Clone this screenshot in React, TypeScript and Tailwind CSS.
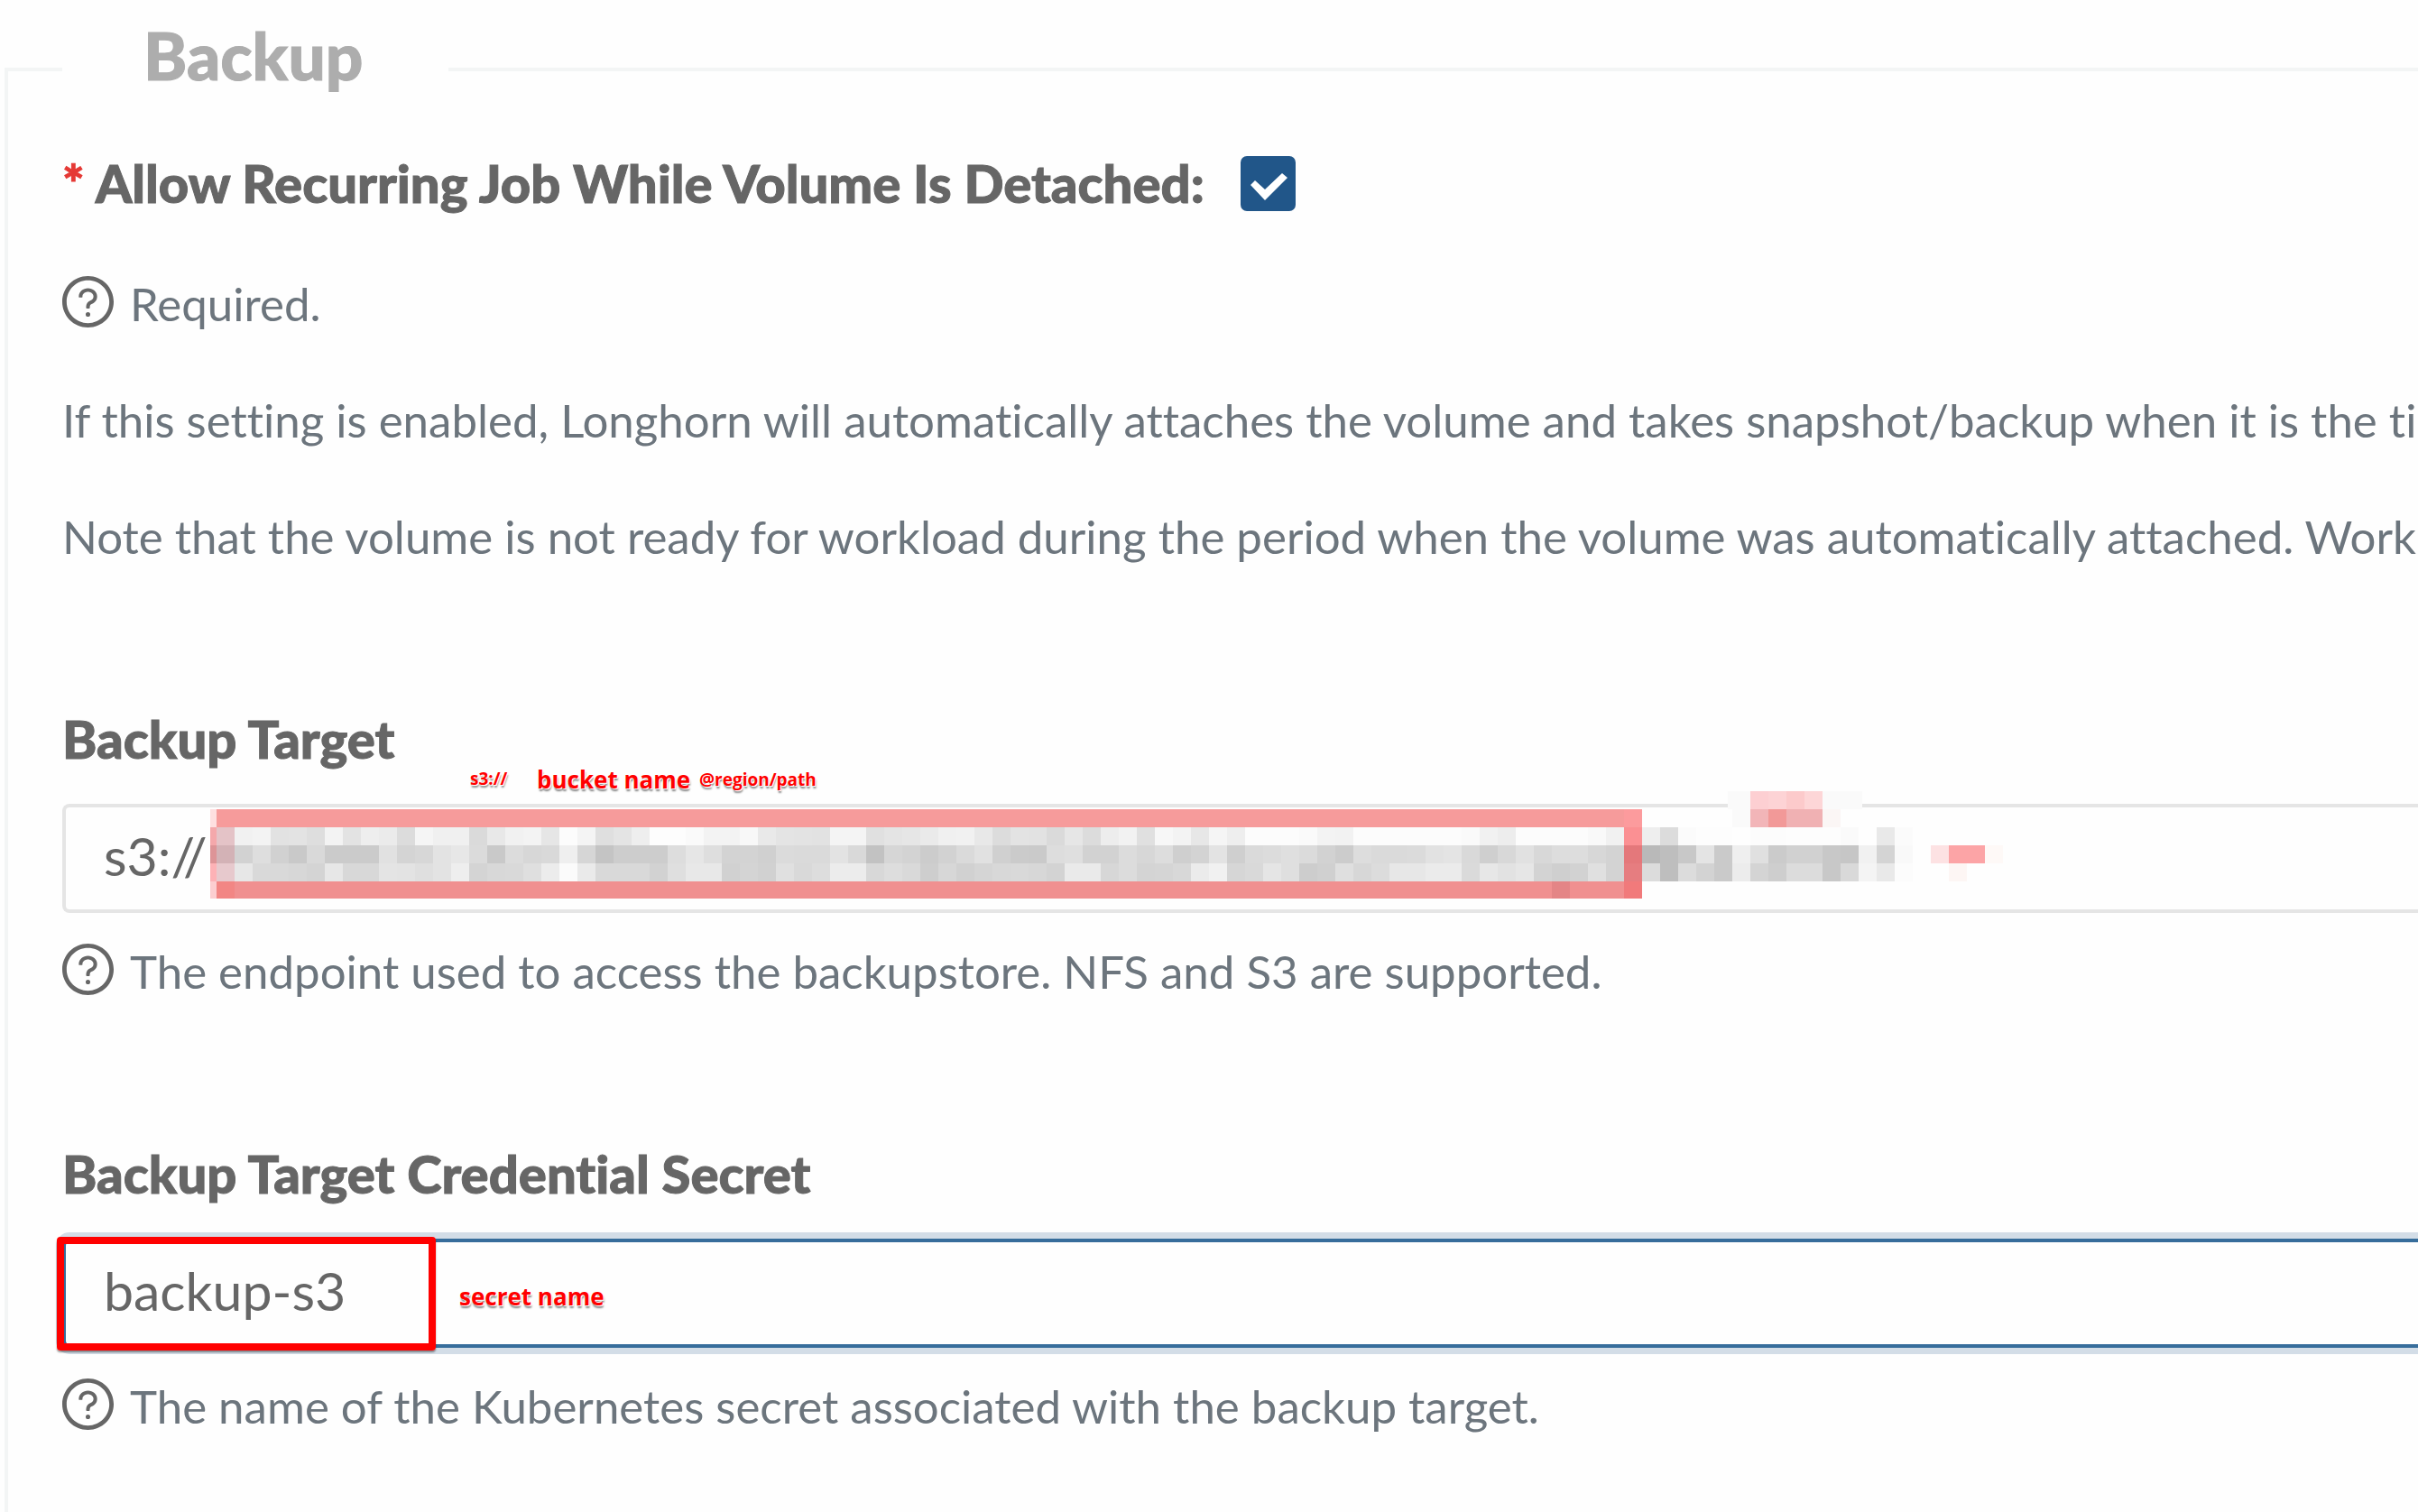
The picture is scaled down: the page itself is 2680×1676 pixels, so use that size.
import type { ReactNode } from "react";
import { AiOutlineQuestionCircle } from "react-icons/ai";

const CELL = 20;

// Grey levels of the censored value, one hex pair for each 20px column.
const greyRows = [
  "e4f1f3e2e3def3e3eeebdcf5f0f0dae8f1f3e6fcf4dfe4eefdfdfaf3f3f8e9e4e3e2f4f4e0e4e6eaf0f1e8dce3e2dae6dcedf2e0f7f3e7f5eefcfcfcfaf3f2fcfcfcfcfcfcfaf1edfcfcfcfcf9f1ffeedcfbfdfdfefcfcfdfdfdfafee9fb",
  "d3d2ded1c9d9cbcbcbe1d4d7e3e7dbc9dcd7d9efd6c4cdcdcddde6ded3d3d0dbdadae3d9c2d6d3ccd2dae1d0cbcadddfd2d2dcd7ddcfd3e3cfdadcdfdbd2ccdddadadbe2e4d9cfd8e1d8ddddd7d3ffb9bec8e4caefe0cbd1d1c8c6f1d4f9",
  "e7e7d9d9d7d4e7d8d8e4e3dfe3eed4d8d9dfecfbead9d9d9d2dfe8e8d1d4d1e0d9ddececd8ddd9ced7d1d5d8d9d7d3eaead7dcd4d5d8ebf1d6d9e5dfcdd0dfd7dce7e7ebebdae7e2e6d3cfd2e0d3ffdcbedcd3caecd4cedcdcc8d9f4e9fc",
];

// Tinted blocks: [x, y, width, height, colour]
const tinted: [number, number, number, number, string][] = [
  [7, 20, 1580, 20, "#f69b9b"],
  [7, 100, 1580, 19, "#f09090"],
  [0, 20, 7, 20, "#fedfe0"],
  [0, 40, 7, 20, "#f4a8ab"],
  [0, 60, 7, 20, "#dd9497"],
  [0, 80, 7, 20, "#fdb2b6"],
  [0, 100, 7, 19, "#fcced0"],
  [7, 40, 20, 20, "#e4c3c7"],
  [7, 60, 20, 20, "#d3b2b6"],
  [7, 80, 20, 20, "#e7c9cd"],
  [7, 100, 20, 19, "#f28684"],
  [1487, 100, 20, 19, "#e48586"],
  [1567, 20, 20, 20, "#fc9b9d"],
  [1567, 40, 20, 20, "#fb9093"],
  [1567, 60, 20, 20, "#e4787b"],
  [1567, 80, 20, 20, "#e67d80"],
  [1567, 100, 20, 19, "#f17a7b"],
  [1682, 0, 149, 20, "#fafafa"],
  [1687, 20, 20, 20, "#fafafa"],
  [1707, 0, 20, 20, "#fdcfd2"],
  [1727, 0, 20, 20, "#fdd3d5"],
  [1747, 0, 20, 20, "#fccacb"],
  [1767, 0, 20, 20, "#fdd6d7"],
  [1707, 20, 20, 20, "#f2b5b8"],
  [1727, 20, 20, 20, "#f29998"],
  [1747, 20, 40, 20, "#f0b1b3"],
  [1787, 20, 20, 20, "#fbf6f5"],
  [1907, 60, 20, 20, "#fde2e3"],
  [1927, 60, 40, 20, "#fca4a6"],
  [1967, 60, 20, 20, "#fef9f7"],
  [1927, 80, 20, 20, "#fdf6f4"],
];

function Mosaic() {
  return (
    <svg
      className="pointer-events-none absolute -top-[14px] left-[164px]"
      width="2000"
      height="120"
      shapeRendering="crispEdges"
      aria-hidden="true"
    >
      {greyRows.map((row, r) =>
        (row.match(/../g) ?? []).map((v, c) => (
          <rect key={`${r}-${c}`} x={7 + c * CELL} y={40 + r * CELL} width={CELL} height={CELL} fill={`#${v}${v}${v}`} />
        )),
      )}
      {tinted.map(([x, y, w, h, fill], i) => (
        <rect key={i} x={x} y={y} width={w} height={h} fill={fill} />
      ))}
    </svg>
  );
}

function Help({ children }: { children: ReactNode }) {
  return (
    <p className="flex items-center gap-[18px] text-[51px] leading-[64px] whitespace-nowrap text-[#6c757d]">
      <AiOutlineQuestionCircle viewBox="64 64 896 896" className="mb-1.5 size-[57px] shrink-0 text-[#666]" />
      {children}
    </p>
  );
}

const heading = "text-[58px] leading-[64px] font-black [-webkit-text-stroke:1px_#666]";

const field =
  "block h-[121px] w-full rounded-l-lg border-4 border-r-0 px-[42px] pb-1.5 text-[59px] outline-none";

const note =
  "pointer-events-none absolute font-['Open_Sans'] font-bold whitespace-nowrap text-[#f00] [text-shadow:1px_1px_0_#fff,-1px_-1px_0_#fff,1px_3px_2px_#888]";

export default function App() {
  return (
    <main className="flex min-h-screen flex-col overflow-hidden bg-[#fefefe] pt-4 pl-[5px] font-[Lato,sans-serif] text-[#666] [font-variant-ligatures:none]">
      <fieldset className="min-w-0 flex-1 border-t-4 border-l-4 border-[#f3f5f5] pl-[60px]">
        <legend className="pr-[95px] pb-8 pl-[90px] text-[73px] leading-[90px] font-black text-[#adadad] [-webkit-text-stroke:1px_#adadad]">
          Backup
        </legend>

        <div className="mt-[33px] flex h-16 items-center whitespace-nowrap">
          <label htmlFor="recurring" className={heading}>
            <span className="mr-3 text-[#e53935] [-webkit-text-stroke:1px_#e53935]">*</span>
            Allow Recurring Job While Volume Is Detached:
          </label>
          <span className="relative ml-10 flex size-[61px]">
            <input
              id="recurring"
              type="checkbox"
              defaultChecked
              className="size-full appearance-none rounded-[7px] bg-[#215689]"
            />
            <svg viewBox="0 0 61 61" className="pointer-events-none absolute inset-0" aria-hidden="true">
              <path d="M11 32L16 27L27 37L46 19L52 24L27 49Z" fill="#fff" />
            </svg>
          </span>
        </div>

        <div className="mt-[70px] flex flex-col gap-[65px]">
          <Help>Required.</Help>
          <p className="text-[51px] leading-[64px] whitespace-nowrap text-[#6c757d]">
            If this setting is enabled, Longhorn will automatically attaches the volume and takes snapshot/backup when it is the ti
          </p>
          <p className="text-[51px] leading-[64px] whitespace-nowrap text-[#6c757d]">
            Note that the volume is not ready for workload during the period when the volume was automatically attached. Work
          </p>
        </div>

        <div className="mt-40">
          <label htmlFor="target" className={`block ${heading}`}>
            Backup Target
          </label>
          <div className="relative mt-10 mb-[33px]">
            <input id="target" type="text" defaultValue="s3://" className={`${field} border-[#e5e5e5]`} />
            <Mosaic />
            <span className={`${note} -top-[40px] left-[452px] text-[19px] leading-[24px]`}>s3://</span>
            <span className={`${note} -top-[43px] left-[526px] text-[26px] leading-[32px]`}>bucket name</span>
            <span className={`${note} -top-[39px] left-[706px] text-[19px] leading-[24px]`}>@region/path</span>
          </div>
          <Help>The endpoint used to access the backupstore. NFS and S3 are supported.</Help>
        </div>

        <div className="mt-40">
          <label htmlFor="secret" className={`block ${heading}`}>
            Backup Target Credential Secret
          </label>
          <div className="relative mt-10 mb-[33px]">
            <input
              id="secret"
              type="text"
              defaultValue="backup-s3"
              className={`${field} border-[#376d9b] shadow-[0_0_0_7px_#d3dde7]`}
            />
            <div className="pointer-events-none absolute -top-0.5 -left-1.5 h-[126px] w-[420px] rounded-[4px] border-8 border-[#f00] shadow-[0_2px_2px_#0006]" />
            <span className={`${note} top-[48px] left-[440px] text-[26px] leading-[32px]`}>secret name</span>
          </div>
          <Help>The name of the Kubernetes secret associated with the backup target.</Help>
        </div>
      </fieldset>
    </main>
  );
}
